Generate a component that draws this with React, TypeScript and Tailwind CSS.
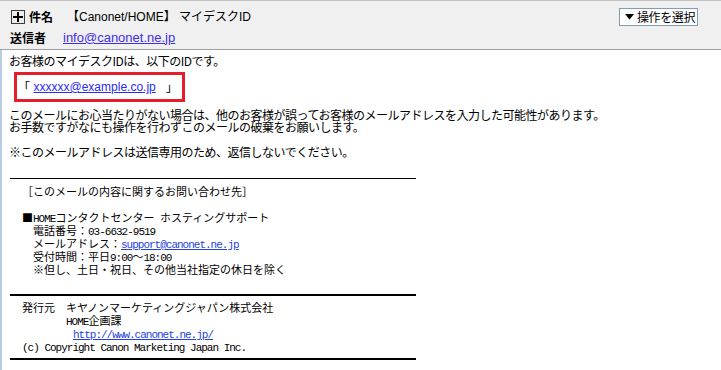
import React from "react";

// ASCII runs get a narrow monospace so they sit on the half-width grid
function Mono({ t }: { t: string }) {
  return (
    <>
      {t.split(/([\x20-\x7e]+)/).map((s, i) =>
        /[\x20-\x7e]/.test(s) ? (
          <span key={i} className="font-['Liberation_Mono',monospace] tracking-[-1px]">
            {s}
          </span>
        ) : (
          <React.Fragment key={i}>{s}</React.Fragment>
        )
      )}
    </>
  );
}

function PlusIcon() {
  return (
    <svg width="14" height="14" viewBox="0 0 14 14">
      <rect x="0.5" y="0.5" width="13" height="13" fill="#ececec" stroke="#3c3c3c" />
      <rect x="6" y="2" width="2" height="10" fill="#000" />
      <rect x="2" y="6" width="10" height="2" fill="#000" />
    </svg>
  );
}

export default function App() {
  return (
    <div className="w-[721px] h-[370px] overflow-hidden bg-white text-black font-['Noto_Sans_CJK_JP',sans-serif]">
      {/* header */}
      <div className="h-[50px] bg-[#f0f0f0] border-t border-[#c4c4c4] border-b border-b-[#a0a0a0] flex flex-col">
        <div className="mt-[5px] h-[21px] flex items-center">
          <div className="w-[67px] pl-[11px] flex items-center gap-[4px]">
            <PlusIcon />
            <span className="text-[12px] font-bold">件名</span>
          </div>
          <span className="text-[12px] font-['Liberation_Sans','Noto_Sans_CJK_JP',sans-serif]">
            【Canonet/HOME】 マイデスクID
          </span>
          <button className="ml-auto mr-[23px] h-[18px] w-[79px] flex-none whitespace-nowrap bg-white border border-[#7f9db9] flex items-center pl-[5px] gap-[3px] text-[12px] tracking-[-0.4px] leading-none">
            <svg width="9" height="6" viewBox="0 0 9 6" className="flex-none">
              <path d="M0 0h9L4.5 5.5z" fill="#000" />
            </svg>
            操作を選択
          </button>
        </div>
        <div className="h-[21px] flex items-center">
          <span className="w-[63px] pl-[10px] text-[12px] font-bold">送信者</span>
          <a className="text-[13px] text-[#3f2fe6] underline font-['Liberation_Sans',sans-serif]">
            info@canonet.ne.jp
          </a>
        </div>
      </div>

      {/* body */}
      <div className="h-[320px] border-l-2 border-[#b8cce4] pl-[7px] pt-[4px] text-[12px] tracking-[-0.5px]">
        <p className="leading-[14px]">お客様のマイデスクIDは、以下のIDです。</p>

        <div className="ml-[5px] mt-[4px] w-[171px] h-[30px] border-[3px] border-[#e41e2b] flex items-center pl-[1px]">
          <span>「</span>
          <a className="ml-[4px] text-[12px] tracking-normal text-[#2b2bf5] underline font-['Liberation_Sans',sans-serif]">
            xxxxxx@example.co.jp
          </a>
          <span className="ml-[10px]">」</span>
        </div>

        <div className="mt-[7px] leading-[12px]">
          <p className="h-[12px]">このメールにお心当たりがない場合は、他のお客様が誤ってお客様のメールアドレスを入力した可能性があります。</p>
          <p className="h-[12px]">お手数ですがなにも操作を行わずこのメールの破棄をお願いします。</p>
          <p className="h-[12px] mt-[13px]">※このメールアドレスは送信専用のため、返信しないでください。</p>
        </div>

        <div className="ml-[1px] mt-[20px] w-[406px] h-px bg-black" />

        <div className="ml-[13px] mt-[6px] text-[11px] leading-[13px] tracking-normal whitespace-pre">
          <p className="h-[13px]">［このメールの内容に関するお問い合わせ先］</p>
          <p className="h-[13px] mt-[13px]">
            <Mono t="■HOMEコンタクトセンター ホスティングサポート" />
          </p>
          <p className="h-[13px] pl-[11px]">
            <Mono t="電話番号：03-6632-9519" />
          </p>
          <p className="h-[13px] pl-[11px]">
            メールアドレス：
            <a className="text-[#1f3fdf] underline">
              <Mono t="support@canonet.ne.jp" />
            </a>
          </p>
          <p className="h-[13px] pl-[11px]">
            <Mono t="受付時間：平日9:00～18:00" />
          </p>
          <p className="h-[13px] pl-[11px]">※但し、土日・祝日、その他当社指定の休日を除く</p>
        </div>

        <div className="ml-[1px] mt-[18px] w-[406px] h-[2px] bg-black" />

        <div className="ml-[13px] mt-[5px] text-[11px] leading-[13px] tracking-normal whitespace-pre">
          <p className="h-[13px]">発行元　キヤノンマーケティングジャパン株式会社</p>
          <p className="h-[13px] pl-[44px]">
            <Mono t="HOME企画課" />
          </p>
          <p className="h-[13px] pl-[51px]">
            <a className="text-[#1f3fdf] underline">
              <Mono t="http://www.canonet.ne.jp/" />
            </a>
          </p>
          <p className="h-[13px]">
            <Mono t="(c) Copyright Canon Marketing Japan Inc." />
          </p>
        </div>

        <div className="ml-[1px] mt-[5px] w-[406px] h-[2px] bg-black" />
      </div>
    </div>
  );
}
